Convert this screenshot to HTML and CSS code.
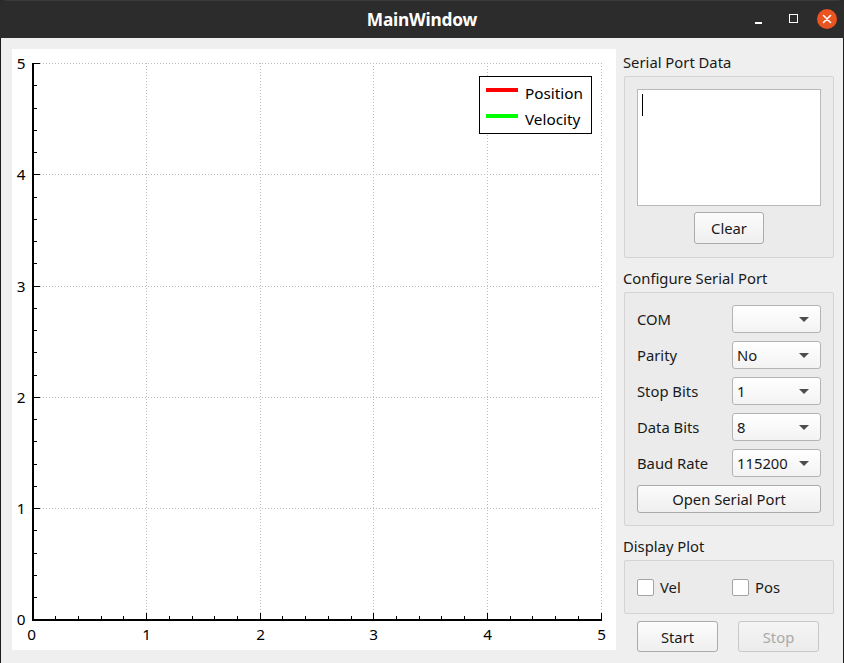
FILE: index.html
```html
<!DOCTYPE html>
<html>
<head>
<meta charset="utf-8">
<title>MainWindow</title>
<link rel="stylesheet" href="styles.css">
</head>
<body>
<div class="window">
  <div class="titlebar">
    <div class="tb-left"></div>
    <div class="title">MainWindow</div>
    <div class="wctrls">
      <span class="wbtn wmin"><span class="minbar"></span></span>
      <span class="wbtn wmax"><span class="maxbox"></span></span>
      <span class="wbtn wclose">
        <svg width="20" height="20" viewBox="0 0 20 20"><path d="M6.5 6.5 L13.5 13.5 M13.5 6.5 L6.5 13.5" stroke="#fff" stroke-width="1.6" stroke-linecap="round"/></svg>
      </span>
    </div>
  </div>
  <div class="main">
    <div class="plot">
      <svg class="chart" width="604" height="601" viewBox="0 0 604 601">
        <g class="grid" stroke="#bdbdbd" stroke-width="1" stroke-dasharray="1 2" fill="none">
          <path d="M28 14.5 H589 M28 125.5 H589 M28 237.5 H589 M28 348.5 H589 M28 459.5 H589"/>
          <path d="M134.5 14 V564 M248.5 14 V564 M361.5 14 V564 M475.5 14 V564 M589.5 14 V564"/>
        </g>
        <g stroke="#000" fill="none">
          <path stroke-width="2" d="M21 14 V572 M20 571 H590"/>
          <path stroke-width="1" d="M22 14.5 H28 M22 125.5 H28 M22 237.5 H28 M22 348.5 H28 M22 459.5 H28"/>
          <path stroke-width="1" d="M22 548.5 H25 M22 526.5 H25 M22 504.5 H25 M22 481.5 H25 M22 437.5 H25 M22 415.5 H25 M22 392.5 H25 M22 370.5 H25 M22 326.5 H25 M22 303.5 H25 M22 281.5 H25 M22 259.5 H25 M22 214.5 H25 M22 192.5 H25 M22 170.5 H25 M22 148.5 H25 M22 103.5 H25 M22 81.5 H25 M22 59.5 H25 M22 36.5 H25"/>
          <path stroke-width="1" d="M134.5 570 V564 M248.5 570 V564 M361.5 570 V564 M475.5 570 V564 M589.5 570 V564"/>
          <path stroke-width="1" d="M43.5 570 V567 M66.5 570 V567 M89.5 570 V567 M111.5 570 V567 M157.5 570 V567 M180.5 570 V567 M202.5 570 V567 M225.5 570 V567 M270.5 570 V567 M293.5 570 V567 M316.5 570 V567 M339.5 570 V567 M384.5 570 V567 M407.5 570 V567 M429.5 570 V567 M452.5 570 V567 M498.5 570 V567 M520.5 570 V567 M543.5 570 V567 M566.5 570 V567"/>
        </g>
        <g class="ticklabels" text-anchor="end">
          <text x="13.5" y="19.5">5</text>
          <text x="13.5" y="130.5">4</text>
          <text x="13.5" y="242.5">3</text>
          <text x="13.5" y="353.5">2</text>
          <text x="13.5" y="464.5">1</text>
          <text x="13.5" y="576">0</text>
        </g>
        <g class="ticklabels" text-anchor="middle">
          <text x="19.5" y="591">0</text>
          <text x="134.5" y="591">1</text>
          <text x="248.5" y="591">2</text>
          <text x="361.5" y="591">3</text>
          <text x="475.5" y="591">4</text>
          <text x="589.5" y="591">5</text>
        </g>
        <g class="legend">
          <rect x="467.5" y="27.5" width="112" height="57" fill="#fff" stroke="#000" stroke-width="1"/>
          <path d="M474 41 H506" stroke="#ff0000" stroke-width="4"/>
          <path d="M474 67 H506" stroke="#00ff00" stroke-width="4"/>
          <text x="513" y="49.5">Position</text>
          <text x="513" y="75.5">Velocity</text>
        </g>
      </svg>
    </div>
    <div class="side">
      <div class="glabel">Serial Port Data</div>
      <div class="group g-data">
        <div class="textedit"><span class="caret"></span></div>
        <div class="center-row"><button class="btn btn-clear">Clear</button></div>
      </div>

      <div class="glabel">Configure Serial Port</div>
      <div class="group g-config">
        <div class="row"><span class="rlabel">COM</span><span class="combo"><span class="cval"></span><span class="arrow"></span></span></div>
        <div class="row"><span class="rlabel">Parity</span><span class="combo"><span class="cval">No</span><span class="arrow"></span></span></div>
        <div class="row"><span class="rlabel">Stop Bits</span><span class="combo"><span class="cval">1</span><span class="arrow"></span></span></div>
        <div class="row"><span class="rlabel">Data Bits</span><span class="combo"><span class="cval">8</span><span class="arrow"></span></span></div>
        <div class="row"><span class="rlabel">Baud Rate</span><span class="combo"><span class="cval">115200</span><span class="arrow"></span></span></div>
        <button class="btn btn-open">Open Serial Port</button>
      </div>

      <div class="glabel">Display Plot</div>
      <div class="group g-display">
        <label class="check c-vel"><span class="box"></span><span>Vel</span></label>
        <label class="check c-pos"><span class="box"></span><span>Pos</span></label>
      </div>

      <div class="actions">
        <button class="btn btn-start">Start</button>
        <button class="btn btn-stop" disabled>Stop</button>
      </div>
    </div>
  </div>
</div>
</body>
</html>
```

FILE: styles.css
```css
* { box-sizing: border-box; }

html, body {
  margin: 0;
  padding: 0;
  width: 844px;
  height: 663px;
  background: #2b2b2b;
  overflow: hidden;
}

body {
  font-family: "Noto Sans", "DejaVu Sans", sans-serif;
  font-size: 14.8px;
  color: #1a1a1a;
}

.window {
  width: 844px;
  height: 663px;
  display: flex;
  flex-direction: column;
  border-radius: 7px 7px 0 0;
  overflow: hidden;
}

.titlebar {
  height: 38px;
  flex: 0 0 38px;
  background: #2c2c2c;
  display: grid;
  grid-template-columns: 1fr auto 1fr;
  align-items: center;
  border-top: 1px solid #3a3a3a;
}

.title {
  color: #ffffff;
  font-weight: bold;
  font-size: 17.3px;
  line-height: 36px;
  letter-spacing: -0.2px;
}

.wctrls {
  justify-self: end;
  display: flex;
  align-items: center;
  padding-right: 7px;
  height: 36px;
}

.wbtn {
  width: 20px;
  height: 20px;
  display: flex;
  align-items: center;
  justify-content: center;
}

.wmin { margin-right: 15px; }
.wmax { margin-right: 14px; }

.minbar {
  width: 7px;
  height: 2px;
  background: #ffffff;
  margin-top: 6px;
}

.maxbox {
  width: 9px;
  height: 9px;
  border: 1.5px solid #ffffff;
  margin-top: -2px;
}

.wclose {
  border-radius: 50%;
  background: #e95420;
  margin-top: -2px;
}

.main {
  flex: 1;
  display: flex;
  background: #efefef;
  border-left: 1px solid #1c1c1c;
  border-right: 1px solid #1c1c1c;
  border-bottom: 1px solid #1c1c1c;
  padding: 11px 0 11px 11px;
}

.plot {
  width: 604px;
  height: 601px;
  background: #ffffff;
  flex: 0 0 604px;
}

.chart { display: block; }

.ticklabels text, .legend text {
  font-family: "Noto Sans", "DejaVu Sans", sans-serif;
  font-size: 15.3px;
  fill: #000;
}

.side {
  flex: 1;
  display: flex;
  flex-direction: column;
  padding: 4px 9px 0 8px;
  margin-top: -11px;
  padding-top: 15px;
}

.glabel {
  height: 20px;
  line-height: 18px;
  margin-bottom: 3px;
  color: #1a1a1a;
  white-space: nowrap;
  margin-left: -1px;
}

.group {
  width: 210px;
  border: 1px solid #d4d4d4;
  border-radius: 2px;
  background: #ebebeb;
  padding: 12px;
  margin-bottom: 11px;
}

.g-data {
  height: 182px;
  display: flex;
  flex-direction: column;
  gap: 6px;
}

.textedit {
  height: 117px;
  background: #ffffff;
  border: 1px solid #b9b9b9;
  padding: 4px 0 0 4px;
}

.caret {
  display: block;
  width: 1px;
  height: 22px;
  background: #000;
}

.center-row {
  display: flex;
  justify-content: center;
}

.btn {
  font-family: "Noto Sans", "DejaVu Sans", sans-serif;
  font-size: 14.8px;
  color: #1a1a1a;
  background: linear-gradient(#fcfcfc, #efefef);
  border: 1px solid #ababab;
  border-radius: 3px;
  padding: 0;
  margin: 0;
}

.btn-clear {
  width: 70px;
  height: 32px;
}

.g-config {
  height: 234px;
  display: flex;
  flex-direction: column;
  gap: 8px;
}

.row {
  height: 28px;
  display: flex;
  align-items: center;
}

.rlabel {
  width: 95px;
  flex: 0 0 95px;
}

.combo {
  width: 89px;
  height: 28px;
  border: 1px solid #b4b4b4;
  border-radius: 3px;
  background: linear-gradient(#ffffff, #f3f3f3);
  display: flex;
  align-items: center;
  padding: 0 11px 0 4px;
}

.cval {
  flex: 1;
}

.arrow {
  width: 0;
  height: 0;
  border-left: 5px solid transparent;
  border-right: 5px solid transparent;
  border-top: 5px solid #4d4d4d;
}

.btn-open {
  width: 184px;
  height: 28px;
}

.g-display {
  height: 54px;
  display: flex;
  align-items: center;
  margin-bottom: 7px;
}

.check {
  display: flex;
  align-items: center;
  gap: 6px;
}

.c-vel { width: 95px; }

.box {
  width: 17px;
  height: 17px;
  background: #ffffff;
  border: 1px solid #a4a4a4;
  border-radius: 2px;
}

.actions {
  display: flex;
  gap: 20px;
  padding-left: 13px;
}

.btn-start, .btn-stop {
  width: 81px;
  height: 31px;
}

.btn-stop {
  color: #a9a9a9;
  border-color: #c8c8c8;
  background: linear-gradient(#f4f4f4, #ececec);
}
```
